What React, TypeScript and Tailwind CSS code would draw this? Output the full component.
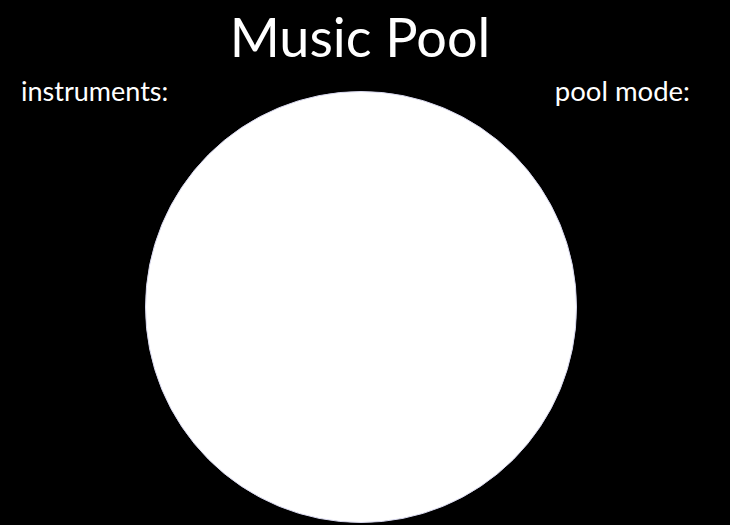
export default function App() {
  return (
    <div
      className="w-[730px] h-[525px] bg-black text-white overflow-hidden flex flex-col"
      style={{ fontFamily: 'Lato, "Open Sans", sans-serif' }}
    >
      <h1 className="text-center text-[54px] leading-none pt-[10px] pr-[10px]">Music Pool</h1>
      <div className="flex justify-between items-start pl-[21px] pr-[40px] mt-[13px]">
        <span className="text-[27px] leading-none">instruments:</span>
        <span className="text-[27.5px] leading-none">pool mode:</span>
      </div>
      <div className="flex justify-center mt-[-14px]">
        <div className="w-[432px] h-[432px] rounded-full bg-white shrink-0 ml-[-9px] border border-[#d8d8ee]" />
      </div>
    </div>
  );
}
